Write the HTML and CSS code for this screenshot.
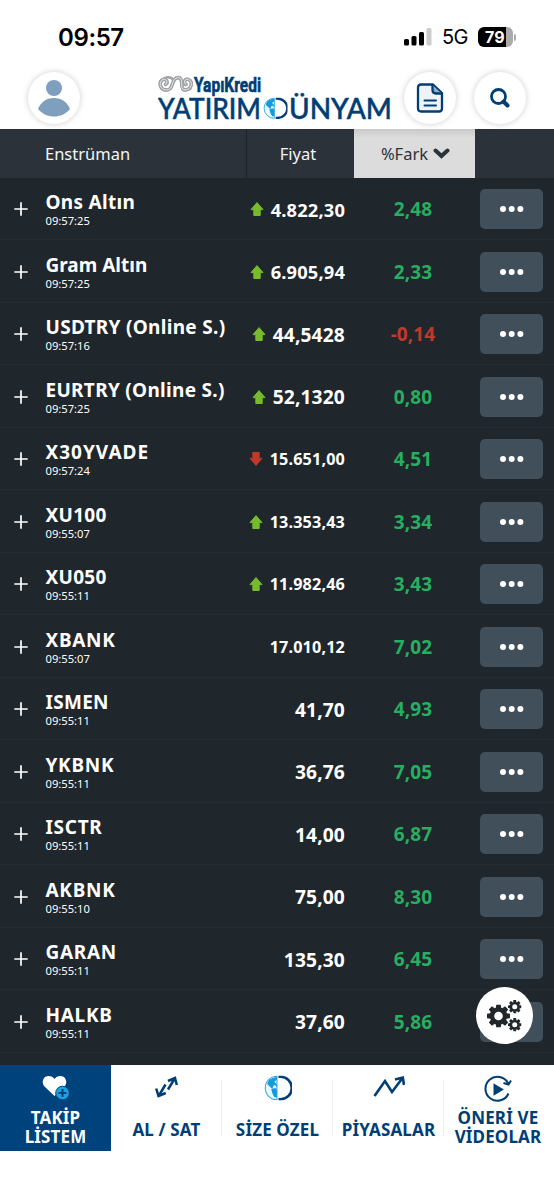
FILE: index.html
```
<!DOCTYPE html>
<html lang="tr">
<head>
<meta charset="utf-8">
<meta name="viewport" content="width=device-width">
<title>Takip Listem</title>
<link rel="stylesheet" href="styles.css">
</head>
<body>
<svg class="defs" width="0" height="0">
  <symbol id="up" viewBox="0 0 14 14"><path d="M7 .6 13 7.6H10.2V13.5H3.8V7.6H1Z" fill="#76bb2c" stroke="#76bb2c" stroke-width="1" stroke-linejoin="round"/></symbol>
  <symbol id="down" viewBox="0 0 14 14"><path d="M7 13.4 13 6.4H10.2V.5H3.8V6.4H1Z" fill="#c0392b" stroke="#c0392b" stroke-width="1" stroke-linejoin="round"/></symbol>
  <symbol id="plus" viewBox="0 0 14 14"><path d="M7 .3V13.7M.3 7H13.700" stroke="#fff" stroke-width="1.700"/></symbol>
  <symbol id="dots" viewBox="0 0 24 6"><circle cx="3" cy="3" r="3"/><circle cx="11.700" cy="3" r="3"/><circle cx="20.400" cy="3" r="3"/></symbol>
  <symbol id="globe" viewBox="0 0 27 24">
    <path d="M12.500.7A11.300 11.300 0 0 0 12.500 23.300Z" fill="#e9f7fe" stroke="#29a9e1" stroke-width="1"/>
    <path d="M5 4 9 2 12.500 1.500V4L10 6 12 8 9 10 8 13 5 10 3 8ZM7 13 11 12 12.500 14V21L10 21 8 17ZM10.500 9 12.500 8V11Z" fill="#159bdc"/>
    <path d="M14 1.200H16A10.800 10.800 0 0 1 16 22.800H14" fill="none" stroke="#003e75" stroke-width="2.500"/>
  </symbol>
  <symbol id="gear" viewBox="-12 -12 24 24">
    <circle r="6.800" fill="none" stroke="#22272b" stroke-width="4.600"/>
    <g fill="#22272b"><path id="teeth" d="M-2.900-8 -2.300-12H2.300L2.900-8ZM-2.900 8 -2.300 12H2.300L2.900 8ZM-8-2.900-12-2.300V2.300L-8 2.900ZM8-2.900 12-2.300V2.300L8 2.900Z"/><use href="#teeth" transform="rotate(45)"/></g>
  </symbol>
</svg>

<div class="statusbar">
  <span class="clock">09:57</span>
  <div class="status-icons">
    <svg width="28" height="18" viewBox="0 0 28 18"><rect y="11" width="5" height="6.500" rx="1.500"/><rect x="7.500" y="8" width="5" height="9.500" rx="1.500"/><rect x="15" y="4" width="5" height="13.500" rx="1.500"/><rect x="22.500" width="5" height="17.500" rx="1.500" fill="#ccc"/></svg>
    <span class="network">5G</span>
    <div class="battery-wrap"><div class="battery">79</div><i class="nub"></i></div>
  </div>
</div>

<header class="topbar">
  <div class="round avatar"><svg width="34" height="40" viewBox="0 0 34 40"><circle cx="17" cy="10" r="8" fill="#7f9fbe"/><path d="M1 31C4 23 11 20 17 20S30 23 33 31C29 36 23 38.500 17 38.500S5 36 1 31Z" fill="#7f9fbe"/></svg></div>
  <svg class="logo" width="236" height="54" viewBox="0 0 236 54">
    <g fill="none" stroke-linecap="round">
      <path id="horns" d="M7.500 13.500C10.500 12 8.500 7.200 5 8.500C.5 10.500 1.500 18.500 8 19C16.500 19.500 12.500 6.500 20.500 6.500C26.500 7 21 19 27 19C33.500 19 35.500 10.500 30.500 8.500C26.500 7.200 25 12 28 13.500" stroke="#a0a2a5" stroke-width="3.400"/>
      <path d="M5 8.500C7.500 5 13.500 6 15 9" stroke="#a0a2a5" stroke-width="2.600"/>
      <use href="#horns" class="horn-line"/>
      <path d="M7.500 13.500C10.500 12 8.500 7.200 5 8.500C.5 10.500 1.500 18.500 8 19C16.500 19.500 12.500 6.500 20.500 6.500C26.500 7 21 19 27 19C33.500 19 35.500 10.500 30.500 8.500C26.500 7.200 25 12 28 13.500" stroke="#fff" stroke-width=".7"/>
    </g>
    <text class="brand" x="36" y="20.500" textLength="67" lengthAdjust="spacingAndGlyphs">YapıKredi</text>
    <text class="wordmark" x="0" y="47.500" textLength="103" lengthAdjust="spacingAndGlyphs">YATIRIM</text>
    <svg x="105" y="26.500" width="24.500" height="21.500" viewBox="0 0 27 24" preserveAspectRatio="none"><use href="#globe" width="27" height="24"/></svg>
    <text class="wordmark" x="131" y="47.500" textLength="103" lengthAdjust="spacingAndGlyphs">ÜNYAM</text>
  </svg>
  <div class="round doc"><svg width="28" height="30" viewBox="0 0 28 30" fill="none" stroke="#003e75" stroke-width="2.300" stroke-linejoin="round" stroke-linecap="round"><path d="M5 1.500H17L26 10V25.500Q26 28.500 23 28.500H5Q2 28.500 2 25.500V4.500Q2 1.500 5 1.500Z" fill="#f0f3f6"/><path d="M16.500 2V7Q16.500 10.500 20 10.500H25.500" fill="#8badca"/><path d="M8.500 17.500H20M8.500 22.500H20" stroke-width="2"/></svg></div>
  <div class="round search"><svg width="22" height="22" viewBox="0 0 22 22" fill="none" stroke="#003e75"><circle cx="9.500" cy="9.500" r="7" stroke-width="2.800"/><path d="M14.500 14.500 18.500 18.500" stroke-width="4" stroke-linecap="round"/></svg></div>
</header>

<div class="table-head">
  <span class="h-name">Enstrüman</span><span class="h-price">Fiyat</span>
  <span class="h-diff">%Fark <svg width="17" height="11" viewBox="0 0 17 11"><path d="M2.500 2.500 8.500 8 14.500 2.500" fill="none" stroke="#2b323a" stroke-width="4" stroke-linecap="round"/></svg></span><span></span>
</div>

<main class="list">
  <div class="row"><svg class="plus"><use href="#plus"/></svg><div class="name"><b>Ons Altın</b><small>09:57:25</small></div><div class="price mid"><svg><use href="#up"/></svg>4.822,30</div><div class="diff">2,48</div><div class="more"><svg><use href="#dots"/></svg></div></div>
  <div class="row"><svg class="plus"><use href="#plus"/></svg><div class="name"><b class="tight">Gram Altın</b><small>09:57:25</small></div><div class="price mid"><svg><use href="#up"/></svg>6.905,94</div><div class="diff">2,33</div><div class="more"><svg><use href="#dots"/></svg></div></div>
  <div class="row"><svg class="plus"><use href="#plus"/></svg><div class="name"><b>USDTRY (Online S.)</b><small>09:57:16</small></div><div class="price"><svg><use href="#up"/></svg>44,5428</div><div class="diff neg">-0,14</div><div class="more"><svg><use href="#dots"/></svg></div></div>
  <div class="row"><svg class="plus"><use href="#plus"/></svg><div class="name"><b>EURTRY (Online S.)</b><small>09:57:25</small></div><div class="price"><svg><use href="#up"/></svg>52,1320</div><div class="diff">0,80</div><div class="more"><svg><use href="#dots"/></svg></div></div>
  <div class="row"><svg class="plus"><use href="#plus"/></svg><div class="name"><b class="wide">X30YVADE</b><small>09:57:24</small></div><div class="price long"><svg><use href="#down"/></svg>15.651,00</div><div class="diff">4,51</div><div class="more"><svg><use href="#dots"/></svg></div></div>
  <div class="row"><svg class="plus"><use href="#plus"/></svg><div class="name"><b>XU100</b><small>09:55:07</small></div><div class="price long"><svg><use href="#up"/></svg>13.353,43</div><div class="diff">3,34</div><div class="more"><svg><use href="#dots"/></svg></div></div>
  <div class="row"><svg class="plus"><use href="#plus"/></svg><div class="name"><b>XU050</b><small>09:55:11</small></div><div class="price long"><svg><use href="#up"/></svg>11.982,46</div><div class="diff">3,43</div><div class="more"><svg><use href="#dots"/></svg></div></div>
  <div class="row"><svg class="plus"><use href="#plus"/></svg><div class="name"><b class="caps">XBANK</b><small>09:55:07</small></div><div class="price long">17.010,12</div><div class="diff">7,02</div><div class="more"><svg><use href="#dots"/></svg></div></div>
  <div class="row"><svg class="plus"><use href="#plus"/></svg><div class="name"><b>ISMEN</b><small>09:55:11</small></div><div class="price">41,70</div><div class="diff">4,93</div><div class="more"><svg><use href="#dots"/></svg></div></div>
  <div class="row"><svg class="plus"><use href="#plus"/></svg><div class="name"><b class="caps">YKBNK</b><small>09:55:11</small></div><div class="price">36,76</div><div class="diff">7,05</div><div class="more"><svg><use href="#dots"/></svg></div></div>
  <div class="row"><svg class="plus"><use href="#plus"/></svg><div class="name"><b class="caps">ISCTR</b><small>09:55:11</small></div><div class="price">14,00</div><div class="diff">6,87</div><div class="more"><svg><use href="#dots"/></svg></div></div>
  <div class="row"><svg class="plus"><use href="#plus"/></svg><div class="name"><b class="caps">AKBNK</b><small>09:55:10</small></div><div class="price">75,00</div><div class="diff">8,30</div><div class="more"><svg><use href="#dots"/></svg></div></div>
  <div class="row"><svg class="plus"><use href="#plus"/></svg><div class="name"><b class="caps">GARAN</b><small>09:55:11</small></div><div class="price">135,30</div><div class="diff">6,45</div><div class="more"><svg><use href="#dots"/></svg></div></div>
  <div class="row"><svg class="plus"><use href="#plus"/></svg><div class="name"><b class="caps">HALKB</b><small>09:55:11</small></div><div class="price">37,60</div><div class="diff">5,86</div><div class="more"><svg><use href="#dots"/></svg></div></div>
  <div class="fab"><svg width="36" height="34" viewBox="0 0 36 34"><use href="#gear" x="0" y="5.500" width="23" height="23"/><use href="#gear" x="21" y="1" width="13.500" height="13.500"/><use href="#gear" x="21" y="19" width="13.500" height="13.500"/></svg></div>
</main>

<nav class="tabs">
  <div class="tab active"><svg width="28" height="26" viewBox="0 0 28 26"><path d="M12.500 21 2.500 11.500C-1 7.500 1 1 6.500 1Q10.500 1 12.500 4Q14.500 1 18.500 1C24 1 26 7.500 22.500 11.500Z" fill="#fff"/><circle cx="20.500" cy="18" r="6.800" fill="#18a5e5" stroke="#00427c" stroke-width="1"/><path d="M20.500 14V22M16.500 18H24.500" stroke="#003e75" stroke-width="2"/></svg><span>TAKİP<br>LİSTEM</span></div>
  <div class="tab one-line"><svg width="28" height="26" viewBox="0 0 28 26" fill="none" stroke="#003e75" stroke-width="2.500"><path d="M15 14.500 22 3M15 6 22 3 23.800 10M12.500 9.500 6 20.500M3.200 13.500 5.500 21 12.800 18"/></svg><span>AL / SAT</span></div>
  <div class="tab one-line"><svg width="28" height="26" viewBox="0 0 27 24"><use href="#globe" width="27" height="24"/></svg><span>SİZE ÖZEL</span></div>
  <div class="tab one-line"><svg width="32" height="26" viewBox="0 0 32 26" fill="none" stroke="#003e75" stroke-width="2.600"><path d="M1.500 21 12 6 19 17 29.500 3M22 4.500 29.800 2.500 31 10"/></svg><span>PİYASALAR</span></div>
  <div class="tab"><svg width="28" height="28" viewBox="0 0 28 28" fill="none" stroke="#003e75" stroke-width="2"><path d="M24.500 18.500A12 12 0 1 1 24 8M19.500 8 24.500 9.500 27 5.500"/><path d="M10.500 10 18 14.500 10.500 19Z" fill="#003e75"/></svg><span>ÖNERİ VE<br>VİDEOLAR</span></div>
</nav>
</body>
</html>
```
FILE: styles.css
```
* { box-sizing: border-box; }
body {
  margin: 0;
  width: 554px;
  height: 1199px;
  overflow: hidden;
  background: #fff;
  font-family: "Noto Sans", sans-serif;
  display: flex;
  flex-direction: column;
}
.defs { position: absolute; }
.statusbar {
  height: 70px;
  padding: 4px 38px 0 58px;
  display: flex;
  align-items: center;
  justify-content: space-between;
  font-family: Inter, sans-serif;
}
.clock { font-size: 24px; font-weight: 600; letter-spacing: -.4px; }
.status-icons { display: flex; align-items: center; gap: 10px; }
.network { font-size: 20px; letter-spacing: -.5px; }
.battery-wrap { display: flex; align-items: center; gap: 1px; }
.battery {
  width: 35px;
  height: 20px;
  border-radius: 6px;
  background: linear-gradient(90deg, #000 79%, #aaa 79%);
  color: #fff;
  font-size: 16px;
  font-weight: 700;
  line-height: 20px;
  padding-left: 7px;
}
.nub { width: 2px; height: 7px; border-radius: 0 2px 2px 0; background: #aaa; }
.topbar {
  height: 59px;
  padding: 0 28px 3px;
  display: flex;
  align-items: center;
}
.round {
  width: 52px;
  height: 52px;
  flex: none;
  border-radius: 50%;
  background: #fff;
  box-shadow: 0 0 6px rgba(0, 0, 0, .2);
  display: flex;
  align-items: center;
  justify-content: center;
}
.logo { margin-left: 78px; }
.doc { margin-left: 10px; }
.search { margin-left: 18px; }
.brand { font: 700 19.5px "Roboto", sans-serif; fill: #003e75; stroke: #003e75; stroke-width: .6px; }
.wordmark { font: 500 28.5px "Lato", sans-serif; fill: #003e75; stroke: #003e75; stroke-width: .5px; }
.table-head {
  height: 48.5px;
  flex: none;
  display: grid;
  grid-template-columns: 247px 107px 121px 79px;
  background: #2b323a;
  color: #f3f5f6;
  font-size: 16.5px;
  line-height: 50px;
}
.h-name { padding-left: 45px; border-right: 1px solid #1c2229; }
.h-price { text-align: center; padding-right: 5px; }
.h-diff {
  height: 49px;
  background: linear-gradient(#c9c9c9, #dcdcdc 9px);
  color: #2b323a;
  display: flex;
  align-items: center;
  justify-content: center;
  gap: 5px;
  padding-left: 2px;
}
.list {
  position: relative;
  height: 887.5px;
  flex: none;
  overflow: hidden;
  background: #1f262c;
  color: #fff;
}
.row {
  height: 62.5px;
  padding-top: 1.5px;
  display: grid;
  grid-template-columns: 45px 190px 110px 135px 63px;
  align-items: center;
  border-bottom: 1px solid #242c33;
}
.plus { width: 14px; height: 14px; margin-left: 14px; }
.name { display: flex; flex-direction: column; white-space: nowrap; padding-left: .5px; padding-top: .5px; }
.name b { font-size: 19px; font-weight: 700; line-height: 24px; letter-spacing: .3px; }
.name .tight { letter-spacing: 0; }
.name .caps { letter-spacing: .7px; }
.name .wide { letter-spacing: 1px; }
.name small { font-size: 11.2px; line-height: 14px; }
.price {
  display: flex;
  align-items: center;
  justify-content: flex-end;
  gap: 7px;
  font-size: 19.2px;
  font-weight: 700;
  letter-spacing: .15px;
}
.price svg { width: 14px; height: 14px; }
.price.mid { font-size: 18.3px; }
.price.long { font-size: 16.2px; }
.diff { padding-left: 1px; text-align: center; font-size: 19px; font-weight: 700; color: #27ae60; letter-spacing: .1px; }
.diff.neg { color: #c0392b; }
.more {
  height: 40px;
  border-radius: 5px;
  background: #414f5b;
  display: flex;
  align-items: center;
  justify-content: center;
}
.more svg { width: 24px; height: 6px; fill: #fff; }
.fab {
  position: absolute;
  right: 21px;
  bottom: 21px;
  width: 57px;
  height: 57px;
  border-radius: 50%;
  background: #fff;
  display: flex;
  align-items: center;
  justify-content: center;
}
.tabs {
  height: 86px;
  display: grid;
  grid-template-columns: 111px 111px 111px 111px 110px;
  color: #003e75;
  font-size: 17px;
  font-weight: 700;
  line-height: 19px;
  letter-spacing: .15px;
  text-align: center;
}
.tab {
  height: 85.5px;
  padding: 10px 0 5px;
  display: flex;
  flex-direction: column;
  align-items: center;
  white-space: nowrap;
  background: linear-gradient(#eee, #eee) right 15px / 1px 56px no-repeat;
}
.tab:last-child { background: none; padding-right: 2px; }
.tab span { height: 38px; display: flex; align-items: center; margin-top: auto; }
.tab.one-line span { height: 32px; }
.tab.active { background: #00427c; color: #fff; }
```
